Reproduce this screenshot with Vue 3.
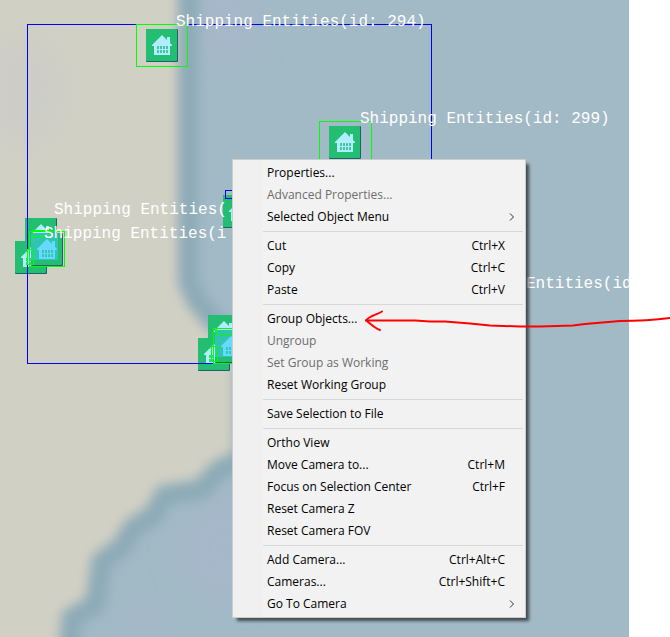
<template>
  <div class="editor">
    <div class="viewport">
      <svg class="scene" aria-hidden="true">
        <defs>
          <filter id="soften" x="-20%" y="-20%" width="140%" height="140%">
            <feGaussianBlur stdDeviation="6" />
          </filter>
          <filter id="haze" x="-40%" y="-40%" width="180%" height="180%">
            <feGaussianBlur stdDeviation="14" />
          </filter>
          <g id="house">
            <path d="M0 10 L10 0 L15 5 V2 H18 V8 L20 10 V11 H18 V20 H2 V11 H0 Z" />
            <path class="panes" d="M5 11h2v3h-2z M8 11h2v3h-2z M5 15h2v3h-2z M8 15h2v3h-2z M11 11h2v3h-2z M14 11h2v3h-2z M11 15h2v3h-2z M14 15h2v3h-2z" />
          </g>
          <g id="marker">
            <rect class="marker-edge" width="32" height="33" rx="1" />
            <rect class="marker-face" width="31" height="32" rx="1" />
          </g>
        </defs>

        <rect class="water" width="100%" height="100%" />
        <ellipse class="lilac" cx="225" cy="20" rx="34" ry="40" filter="url(#haze)" />
        <ellipse class="lilac" cx="225" cy="550" rx="45" ry="50" filter="url(#haze)" />
        <ellipse class="lilac" cx="145" cy="630" rx="25" ry="20" filter="url(#haze)" />
        <path class="shore" :d="coast" filter="url(#soften)" />
        <path class="land" :d="coast" filter="url(#soften)" />
        <ellipse class="land-grey" cx="25" cy="90" rx="40" ry="55" filter="url(#haze)" />

        <g v-for="(m, i) in markers" :key="'m' + i" :class="m.tone" :transform="`translate(${m.x} ${m.y})`">
          <use href="#marker" />
          <rect v-if="m.tone" class="tint" width="27" height="27" />
          <use href="#house" x="6" y="6" />
        </g>

        <rect
          v-for="(b, i) in boxes"
          :key="'b' + i"
          :class="['box', b.color]"
          :x="b.x"
          :y="b.y"
          :width="b.w"
          :height="b.h"
        />
      </svg>

      <svg class="scene">
        <text v-for="(l, i) in labels" :key="i" class="label" :x="l.x" :y="l.y">{{ l.text }}</text>
      </svg>
    </div>

    <div class="menu" role="menu" aria-label="Object menu">
      <div v-for="(group, gi) in groups" :key="gi" class="menu-group" role="group">
        <button
          v-for="item in group"
          :key="item.label"
          class="menu-item"
          type="button"
          role="menuitem"
          :disabled="item.disabled"
        >
          <span class="menu-label">{{ item.label }}</span>
          <span v-if="item.keys" class="menu-keys">{{ item.keys }}</span>
          <svg v-if="item.sub" class="chevron" viewBox="0 0 6 8" aria-hidden="true">
            <path d="M1 0.5 L4.5 4 L1 7.5" />
          </svg>
        </button>
      </div>
    </div>

    <svg class="annotation" aria-hidden="true">
      <path d="M670 318 C655 320 640 321 620 321 L585 324 L573 325.5 L540 326.5 L520 326.5 L490 325.5 L470 323.5 L445 321.5 L430 321.5 L415 320.5 L366 320.5" />
      <path d="M382 311.5 C376 315 369 316 366 320.5 C370 323 374 328 380 330" />
    </svg>
  </div>
</template>

<script setup>
const coast =
  'M-40 -40 H178 V284 L188 306 L204 326 L234 348 V452 L212 462 L196 480 L158 486 L146 508 L126 520 L114 540 L92 556 L86 598 L62 612 L56 680 H-40 Z'

const markers = [
  { x: 146, y: 29 },
  { x: 329, y: 126 },
  { x: 223, y: 195 },
  { x: 25, y: 218 },
  { x: 15, y: 241 },
  { x: 31, y: 233, tone: 'front' },
  { x: 208, y: 315 },
  { x: 198, y: 338 },
  { x: 215, y: 330, tone: 'front' }
]

const boxes = [
  { x: 27, y: 24, w: 404, h: 339, color: 'blue' },
  { x: 225, y: 190, w: 14, h: 8, color: 'blue' },
  { x: 136, y: 24, w: 51, h: 42, color: 'green' },
  { x: 319, y: 121, w: 52, h: 44, color: 'green' },
  { x: 29, y: 231, w: 35, h: 35, color: 'green' },
  { x: 32, y: 230, w: 17, h: 7, color: 'green' },
  { x: 27, y: 249, w: 6, h: 15, color: 'green' },
  { x: 213, y: 328, w: 35, h: 35, color: 'green' },
  { x: 216, y: 328, w: 17, h: 6, color: 'green' },
  { x: 211, y: 346, w: 6, h: 15, color: 'green' }
]

const labels = [
  { x: 176, y: 26, text: 'Shipping Entities(id: 294)' },
  { x: 360, y: 123, text: 'Shipping Entities(id: 299)' },
  { x: 54, y: 214, text: 'Shipping Entities(' },
  { x: 44, y: 238, text: 'Shipping Entities(i' },
  { x: 526, y: 288, text: 'Entities(id' }
]

const groups = [
  [
    { label: 'Properties...' },
    { label: 'Advanced Properties...', disabled: true },
    { label: 'Selected Object Menu', sub: true }
  ],
  [
    { label: 'Cut', keys: 'Ctrl+X' },
    { label: 'Copy', keys: 'Ctrl+C' },
    { label: 'Paste', keys: 'Ctrl+V' }
  ],
  [
    { label: 'Group Objects...' },
    { label: 'Ungroup', disabled: true },
    { label: 'Set Group as Working', disabled: true },
    { label: 'Reset Working Group' }
  ],
  [{ label: 'Save Selection to File' }],
  [
    { label: 'Ortho View' },
    { label: 'Move Camera to...', keys: 'Ctrl+M' },
    { label: 'Focus on Selection Center', keys: 'Ctrl+F' },
    { label: 'Reset Camera Z' },
    { label: 'Reset Camera FOV' }
  ],
  [
    { label: 'Add Camera...', keys: 'Ctrl+Alt+C' },
    { label: 'Cameras...', keys: 'Ctrl+Shift+C' },
    { label: 'Go To Camera', sub: true }
  ]
]
</script>

<style>
body {
  margin: 0;
  background: #fff;
}
</style>

<style scoped>
.editor {
  position: relative;
  display: flex;
  min-height: 100vh;
  padding-right: 41px;
  box-sizing: border-box;
  overflow: hidden;
}

.viewport {
  position: relative;
  flex: 1;
  overflow: hidden;
  background: #a2b9c6;
}

.scene {
  position: absolute;
  inset: 0;
  width: 100%;
  height: 100%;
  --house: #b0eeff;
  --panes: #45c8a0;
}

.front {
  --house: #66d9ff;
  --panes: #35c8b8;
}

.water {
  fill: #a2b9c6;
}

.lilac {
  fill: #a6b7c9;
}

.shore {
  fill: none;
  stroke: #8caab7;
  stroke-width: 40;
}

.land {
  fill: #d1d0c4;
}

.land-grey {
  fill: #cdcdc7;
}

.marker-edge {
  fill: #1d6070;
}

.marker-face {
  fill: #23be71;
}

#house {
  fill: var(--house);
}

.panes {
  fill: var(--panes);
}

.tint {
  fill: #40ccee;
  fill-opacity: 0.5;
}

.box {
  fill: none;
  stroke-width: 1;
  shape-rendering: crispEdges;
}

.blue {
  stroke: #00f;
}

.green {
  stroke: #0f0;
}

.label {
  fill: #fff;
  font-family: "Liberation Mono", monospace;
  font-size: 16px;
}

.menu {
  position: absolute;
  top: 159px;
  left: 232px;
  width: 294px;
  box-sizing: border-box;
  padding: 2px;
  background: linear-gradient(to right, #f0f0f0 30px, #f2f2f2 30px);
  border: 1px solid #ccc;
  box-shadow: 4px 4px 3px -1px rgba(0, 0, 0, 0.6);
  font-family: "Open Sans", "Noto Sans", sans-serif;
  font-size: 12px;
}

.menu-group + .menu-group {
  padding-top: 7px;
  background: linear-gradient(#d7d7d7, #d7d7d7) 28px 3px / 100% 1px no-repeat;
}

.menu-item {
  display: flex;
  align-items: center;
  width: 100%;
  height: 22px;
  padding: 0 18px 0 32px;
  border: 0;
  background: none;
  color: #000;
  font: inherit;
  line-height: 22px;
  text-align: left;
}

.menu-item:disabled {
  color: #6d6d6d;
}

.menu-label {
  flex: 1;
  white-space: nowrap;
}

.chevron {
  width: 6px;
  height: 8px;
  margin-right: -10px;
  fill: none;
  stroke: #333;
}

.annotation {
  position: absolute;
  inset: 0;
  width: 100%;
  height: 100%;
  pointer-events: none;
  fill: none;
  stroke: #f00;
  stroke-width: 2;
  stroke-linecap: round;
  stroke-linejoin: round;
}
</style>
